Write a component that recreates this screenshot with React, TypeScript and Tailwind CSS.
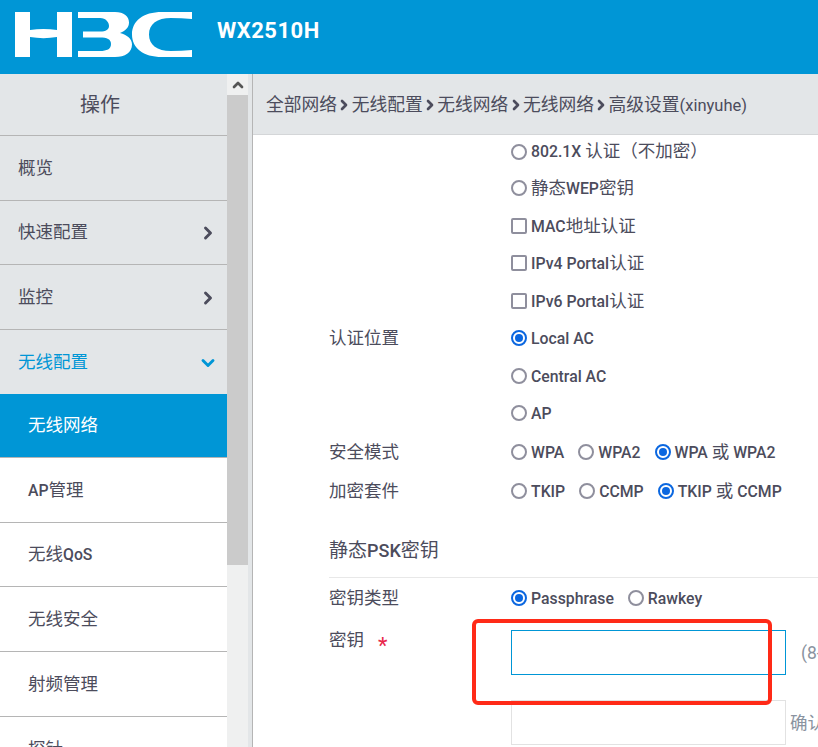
import React from "react";
import { ChevronRight, ChevronDown, ChevronUp } from "lucide-react";

const topMenu = [
  { label: "概览" },
  { label: "快速配置", icon: "right" },
  { label: "监控", icon: "right" },
  { label: "无线配置", icon: "down", active: true },
];

const subMenu = ["AP管理", "无线QoS", "无线安全", "射频管理", "探针"];

const crumbs = ["全部网络", "无线配置", "无线网络", "无线网络", "高级设置(xinyuhe)"];

// latin runs are set smaller than the CJK ones
const Mix = ({ text, latin = "text-[15.800px] font-medium" }: { text: string; latin?: string }) => (
  <span>
    {text.split(/([\x00-\x7f]+)/).map((part, i) =>
      i % 2 === 1 ? (
        <span key={i} className={latin}>
          {part}
        </span>
      ) : (
        part
      )
    )}
  </span>
);

const Logo = () => (
  <svg width="177" height="45" viewBox="0 0 177 45" className="shrink-0">
    <path
      fill="#fff"
      d="M0 0h15v18c9-1.500 18-1.500 27 0V0h15v45H42V25c-9 1.500-18 1.500-27 0v20H0z"
    />
    <path
      fill="#fff"
      d="M63 0h37c9 0 14 4.500 14 10.500 0 4.500-3 8-9 10.500 7 2 12 5.500 12 11.500 0 8-7 12.500-17 12.500H63v-6h22c7 0 11-2 11-7s-4-6.500-11-6.500H68v-6h17c6 0 9-2 9-5.500S91 6 85 6H63z"
    />
    <path
      fill="#fff"
      d="M177 0v7c-7-.7-14-1-21-1-14 0-22 6-22 16.500S142 39 156 39c7 0 14-.3 21-1v7h-30c-19 0-30-9-30-22.500S128 0 147 0z"
    />
  </svg>
);

const Radio = ({ checked }: { checked?: boolean }) =>
  checked ? (
    <span className="w-4 h-4 rounded-full border-2 border-[#0b67e0] flex items-center justify-center shrink-0">
      <span className="w-2 h-2 rounded-full bg-[#0b67e0]" />
    </span>
  ) : (
    <span className="w-4 h-4 rounded-full border-2 border-[#8f8f9d] shrink-0" />
  );

const Check = () => (
  <span className="w-4 h-4 rounded-[2px] border-2 border-[#8f8f9d] shrink-0" />
);

const Option = ({
  label,
  checked,
  box,
}: {
  label: string;
  checked?: boolean;
  box?: boolean;
}) => (
  <div className="flex items-center gap-1 whitespace-nowrap">
    {box ? <Check /> : <Radio checked={checked} />}
    <Mix text={label} />
  </div>
);

const Row = ({
  label,
  children,
  className,
}: {
  label?: string;
  children: React.ReactNode;
  className: string;
}) => (
  <div className={`flex items-center ${className}`}>
    <div className="w-[182px] shrink-0">{label}</div>
    {children}
  </div>
);

export default function App() {
  return (
    <div
      className="w-[818px] h-[747px] overflow-hidden flex flex-col bg-white text-[#4c4c5c] text-[17.500px]"
      style={{ fontFamily: 'Roboto, "Noto Sans CJK SC", sans-serif' }}
    >
      {/* Header */}
      <div className="h-[74px] shrink-0 bg-[#0096d6] flex items-start pl-[15px] pt-[12px] gap-[25px]">
        <Logo />
        <span className="text-white font-bold text-[22px] tracking-[0.5px] mt-[2px]">WX2510H</span>
      </div>

      <div className="flex flex-1 min-h-0">
        {/* Sidebar */}
        <div className="w-[227px] shrink-0">
          <div className="h-[62px] bg-[#e3e6e8] border-b border-[#b5b5b5] flex items-center justify-center text-[20px] pr-[27px] pt-[1px]">
            操作
          </div>
          {topMenu.map((item) => (
            <div
              key={item.label}
              className={`bg-[#e3e6e8] flex items-center justify-between pl-[18px] pr-[9px] ${
                item.active ? "h-[64px] text-[#0096d6]" : "h-[64.7px] border-b border-[#b5b5b5]"
              }`}
            >
              <span>{item.label}</span>
              {item.icon === "right" && <ChevronRight size={20} strokeWidth={3.5} className="mt-[1px]" />}
              {item.icon === "down" && <ChevronDown size={20} strokeWidth={3.5} className="mt-[1px]" />}
            </div>
          ))}
          <div className="h-[63px] bg-[#0096d6] text-white flex items-center pl-[28px]">
            无线网络
          </div>
          {subMenu.map((label) => (
            <div
              key={label}
              className="h-[64.7px] border-t border-[#b5b5b5] flex items-center pl-[28px]"
            >
              <Mix text={label} />
            </div>
          ))}
        </div>

        {/* Scrollbar */}
        <div className="w-[21px] shrink-0 bg-[#eff0f0] flex flex-col">
          <div className="h-[21px] flex items-center justify-center">
            <ChevronUp size={16} strokeWidth={4} className="text-[#555]" />
          </div>
          <div className="h-[470px] bg-[#cbcbcb]" />
        </div>
        <div className="w-[4px] shrink-0 bg-[#e3e6e8] border-r border-[#b5b5b5] box-content" />

        {/* Content */}
        <div className="flex-1 min-w-0 flex flex-col overflow-hidden">
          <div className="h-[61px] shrink-0 bg-[#e3e6e8] border-b border-[#d4d6d8] flex items-center pl-[13px] whitespace-nowrap pt-[2px] text-[17.750px]">
            {crumbs.map((c, i) => (
              <React.Fragment key={i}>
                {i > 0 && <ChevronRight size={16} strokeWidth={4} className="mx-[-0.700px] shrink-0" />}
                <Mix text={c} latin="text-[16.500px]" />
              </React.Fragment>
            ))}
          </div>

          <div className="relative pl-[76px] flex-1">
            <Row className="h-[30px] mt-[1.500px] mb-[3px]">
              <Option label="802.1X 认证（不加密）" />
            </Row>
            <Row className="h-[37.500px]">
              <Option label="静态WEP密钥" />
            </Row>
            <Row className="h-[37.500px]">
              <Option label="MAC地址认证" box />
            </Row>
            <Row className="h-[37.500px]">
              <Option label="IPv4 Portal认证" box />
            </Row>
            <Row className="h-[37.500px]">
              <Option label="IPv6 Portal认证" box />
            </Row>
            <Row label="认证位置" className="h-[37.500px]">
              <Option label="Local AC" checked />
            </Row>
            <Row className="h-[37.500px]">
              <Option label="Central AC" />
            </Row>
            <Row className="h-[37.500px]">
              <Option label="AP" />
            </Row>
            <Row label="安全模式" className="h-[39.500px]">
              <div className="flex gap-[14px]">
                <Option label="WPA" />
                <Option label="WPA2" />
                <Option label="WPA 或 WPA2" checked />
              </div>
            </Row>
            <Row label="加密套件" className="h-[39.500px]">
              <div className="flex gap-[14px]">
                <Option label="TKIP" />
                <Option label="CCMP" />
                <Option label="TKIP 或 CCMP" checked />
              </div>
            </Row>
            <div className="h-[66.500px] flex items-center text-[19px] border-b border-[#e8e8e8] pt-[15px]">
              <Mix text="静态PSK密钥" latin="text-[18px] font-medium" />
            </div>
            <Row label="密钥类型" className="h-[41px]">
              <div className="flex gap-[14px]">
                <Option label="Passphrase" checked />
                <Option label="Rawkey" />
              </div>
            </Row>
            <div className="flex mt-[11px]">
              <div className="w-[182px] shrink-0 flex items-start gap-[14px] mt-[-3px]">
                密钥
                <span className="text-[#e8274b] text-[22px] leading-[38px]">*</span>
              </div>
              <div className="w-[275px] h-[45px] shrink-0 border border-[#0096d6]" />
              <span className="ml-[15px] mt-[10px] text-[#8a93a0] whitespace-nowrap">(8-63)</span>
            </div>
            <div className="flex mt-[25px] ml-[182px]">
              <div className="w-[275px] h-[45px] shrink-0 border border-[#e2e2e2]" />
              <span className="ml-[4px] mt-[10px] text-[#8a93a0] whitespace-nowrap">确认密钥</span>
            </div>

            {/* red annotation box */}
            <div className="absolute left-[219px] top-[484px] w-[300px] h-[86px] border-[4px] border-[#ff2a17] rounded-[6px]" />
          </div>
        </div>
      </div>
    </div>
  );
}
